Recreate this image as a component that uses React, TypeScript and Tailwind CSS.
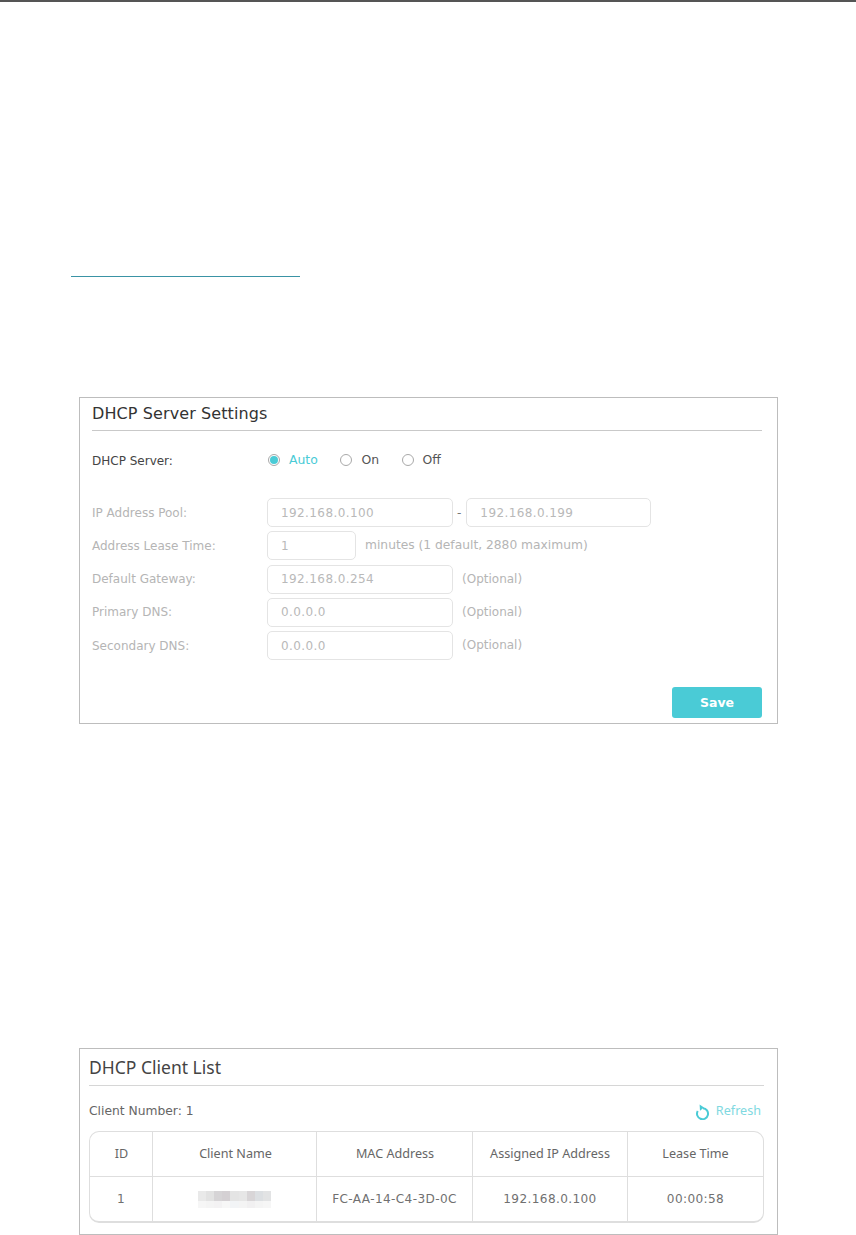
const labelFont = "font-['DejaVu_Sans','Liberation_Sans',sans-serif]";

function Field({ w, value }: { w: string; value: string }) {
  return (
    <div className={`${w} h-[29px] shrink-0 border border-[#e4e4e4] rounded-[5px] pl-[13px] flex items-center text-[12px] text-[#b9b9b9] tracking-[0.4px]`}>
      {value}
    </div>
  );
}

function Row({ label, children }: { label: string; children: React.ReactNode }) {
  return (
    <div className="h-[33.25px] flex items-center">
      <div className="w-[175px] shrink-0 text-[12px] text-[#b5b5b5]">{label}</div>
      {children}
    </div>
  );
}

function Note({ children, size }: { children: React.ReactNode; size: string }) {
  return <span className={`ml-[9px] ${size} text-[#b5b5b5] -mt-[1px]`}>{children}</span>;
}

function Radio({ label, checked }: { label: string; checked?: boolean }) {
  return (
    <div className="flex items-center gap-[9px]">
      <div className="w-[12px] h-[12px] rounded-full border border-[#a9a9a9] flex items-center justify-center">
        {checked && <div className="w-[8px] h-[8px] rounded-full bg-[#4acbd6]" />}
      </div>
      <span className={`text-[12.4px] ${checked ? "text-[#4acbd6]" : "text-[#555555]"}`}>{label}</span>
    </div>
  );
}

const mosaic = [
  { h: "h-[10px]", cells: ["#e9e9e9", "#e2e2e2", "#d6d4d6", "#d4d0d3", "#e4e4e4", "#e6e6e6", "#d8d5d7", "#dcdfe2", "#e2e3e4"] },
  { h: "h-[7px]", cells: ["#f6f6f6", "#f4f4f4", "#f3f2f3", "#f7f7f7", "#f2f4f6", "#f4f4f4", "#f1f0f1", "#f4f4f4", "#f6f6f6"] },
];

const dataCell = `h-full flex items-center justify-center text-[12.1px] tracking-[0.38px] text-[#707070] ${labelFont}`;
const headCell = "h-full flex items-center justify-center";

export default function App() {
  return (
    <div className={`w-[856px] h-[1235px] bg-white overflow-hidden ${labelFont}`}>
      <div className="h-[2px] bg-[#555555]" />
      <div className="ml-[71px] mt-[274px] w-[229px] h-[1px] bg-[#3a93a5]" />

      <section className="ml-[79px] mt-[120px] w-[699px] h-[327px] border border-[#bdbdbd] pl-[12px] pr-[15px] flex flex-col">
        <h2 className="h-[33px] shrink-0 border-b border-[#c9c9c9] text-[16px] leading-[32px] text-[#333333] tracking-[0.1px]">
          DHCP Server Settings
        </h2>
        <div className="mt-[13px] h-[33px] shrink-0 flex items-center">
          <div className="w-[175px] shrink-0 text-[12px] text-[#444444]">DHCP Server:</div>
          <div className="flex items-center gap-[22.6px] -mt-[1px] ml-[1px]">
            <Radio label="Auto" checked />
            <Radio label="On" />
            <Radio label="Off" />
          </div>
        </div>
        <div className="mt-[19px] flex flex-col">
          <Row label="IP Address Pool:">
            <Field w="w-[186px]" value="192.168.0.100" />
            <span className="ml-[4px] mr-[5px] text-[12px] text-[#777777]">-</span>
            <Field w="w-[185px]" value="192.168.0.199" />
          </Row>
          <Row label="Address Lease Time:">
            <Field w="w-[89px]" value="1" />
            <Note size="text-[12.28px]">minutes (1 default, 2880 maximum)</Note>
          </Row>
          <Row label="Default Gateway:">
            <Field w="w-[186px]" value="192.168.0.254" />
            <Note size="text-[12px]">(Optional)</Note>
          </Row>
          <Row label="Primary DNS:">
            <Field w="w-[186px]" value="0.0.0.0" />
            <Note size="text-[12px]">(Optional)</Note>
          </Row>
          <Row label="Secondary DNS:">
            <Field w="w-[186px]" value="0.0.0.0" />
            <Note size="text-[12px]">(Optional)</Note>
          </Row>
        </div>
        <div className="mt-[25px] flex justify-end">
          <button className="w-[90px] h-[31px] pt-[1px] rounded-[3px] bg-[#4acbd6] text-white text-[12.5px] font-bold">Save</button>
        </div>
      </section>

      <section className="ml-[79px] mt-[324px] w-[699px] h-[187px] border border-[#bdbdbd] px-[9px] flex flex-col font-['Noto_Sans','Open_Sans',sans-serif]">
        <h2 className="w-[675px] h-[37px] shrink-0 border-b border-[#d6d6d6] text-[17.5px] leading-[37px] text-[#444444]">
          DHCP Client List
        </h2>
        <div className="w-[675px] h-[45px] shrink-0 flex items-center justify-between pt-[6px]">
          <span className={`text-[12.3px] text-[#666666] ${labelFont}`}>Client Number: 1</span>
          <span className="flex items-center gap-[7px] text-[12.6px] text-[#7fd9e1] pr-[3px]">
            <svg width="13" height="16" viewBox="0 0 13 16" fill="none" className="mt-[1px]">
              <path d="M7 4.2A5.5 5.5 0 1 1 1.74 6.95" stroke="#4acbd6" strokeWidth="2" />
              <path d="M3.6 .4 8 3.6 4 6.8Z" fill="#4acbd6" />
            </svg>
            Refresh
          </span>
        </div>
        <div className="w-[675px] h-[92px] border border-[#dedede] border-b-2 rounded-[10px] overflow-hidden text-[12.6px] text-[#666666]">
          <div className="grid grid-cols-[63px_164px_156px_155px_1fr] h-[45px] border-b border-[#dedede] text-center items-center">
            <div className={`${headCell} border-r border-[#dedede] pl-[1px]`}>ID</div>
            <div className={`${headCell} border-r border-[#dedede] pl-[2px]`}>Client Name</div>
            <div className={`${headCell} border-r border-[#dedede] pl-[1px]`}>MAC Address</div>
            <div className={`${headCell} border-r border-[#dedede]`}>Assigned IP Address</div>
            <div className={headCell}>Lease Time</div>
          </div>
          <div className="grid grid-cols-[63px_164px_156px_155px_1fr] h-[45px] text-center items-center">
            <div className={`${dataCell} border-r border-[#dedede]`}>1</div>
            <div className={`${dataCell} border-r border-[#dedede]`}>
              <div className="flex flex-col">
                {mosaic.map((row, i) => (
                  <div key={i} className="flex">
                    {row.cells.map((c, j) => (
                      <div key={j} className={`w-[8.1px] ${row.h}`} style={{ backgroundColor: c }} />
                    ))}
                  </div>
                ))}
              </div>
            </div>
            <div className={`${dataCell} border-r border-[#dedede]`}>FC-AA-14-C4-3D-0C</div>
            <div className={`${dataCell} border-r border-[#dedede]`}>192.168.0.100</div>
            <div className={dataCell}>00:00:58</div>
          </div>
        </div>
      </section>
    </div>
  );
}
